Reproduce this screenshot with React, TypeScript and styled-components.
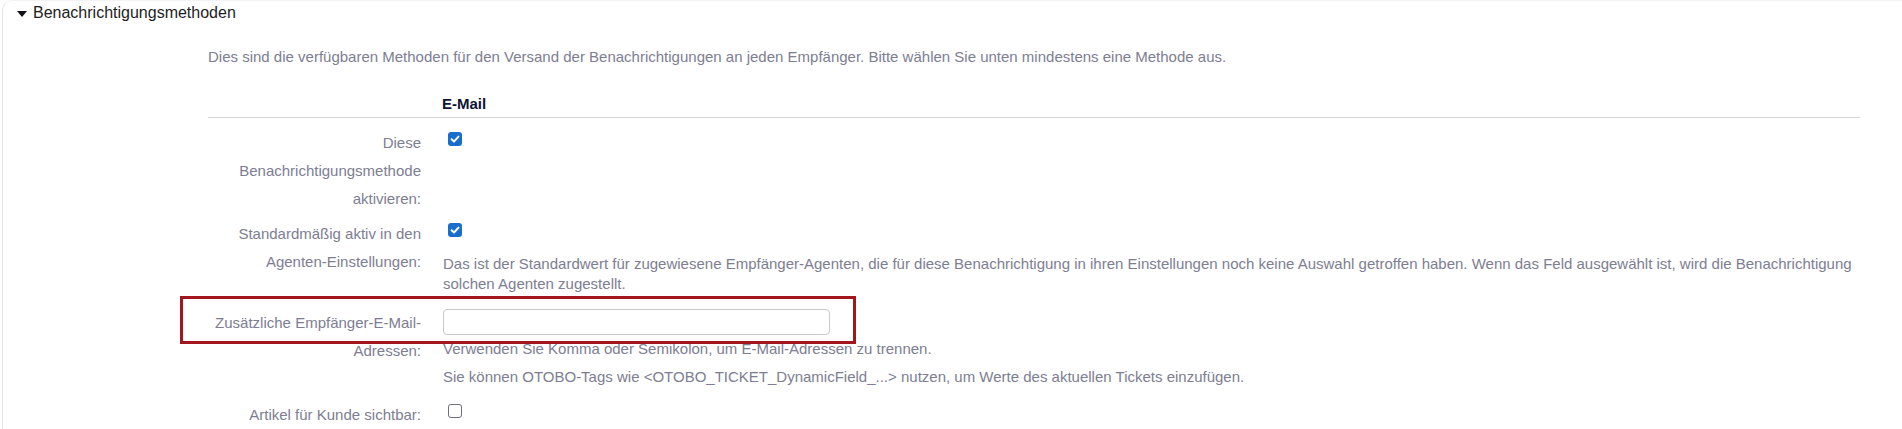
import React from "react";
import styled, { createGlobalStyle } from "styled-components";

const GlobalStyle = createGlobalStyle`
  html, body {
    margin: 0;
    padding: 0;
    background: #ffffff;
  }
  body {
    font-family: "Liberation Sans", Arial, Helvetica, sans-serif;
    font-size: 15px;
    color: #7d7e91;
  }
`;

const Panel = styled.section`
  margin-left: 2px;
  min-height: 429px;
  box-sizing: border-box;
  border-left: 1px solid #e3e3e9;
  border-top: 1px solid #f3f3f6;
  border-top-left-radius: 10px;
`;

const Header = styled.div`
  display: flex;
  align-items: center;
  gap: 6px;
  padding: 2px 0 0 14px;
  height: 20px;
  font-size: 16px;
  line-height: 20px;
  color: #1d1d22;
`;

const Caret = styled.span`
  width: 0;
  height: 0;
  border-left: 5px solid transparent;
  border-right: 5px solid transparent;
  border-top: 6px solid #111118;
  margin-top: 1px;
`;

const Content = styled.div`
  margin: 0 42px 0 205px;
`;

const Intro = styled.p`
  margin: 24px 0 0 0;
  line-height: 20px;
  color: #7d7e91;
`;

const Grid = styled.div`
  display: grid;
  grid-template-columns: 213px 1fr;
  column-gap: 22px;
`;

const HeadRow = styled(Grid)`
  margin-top: 27px;
  border-bottom: 1px solid #d4d4d8;
  padding-bottom: 3px;
`;

const ColumnTitle = styled.div`
  grid-column: 2;
  font-weight: bold;
  line-height: 20px;
  color: #0d1433;
  margin-left: -1px;
`;

const Row = styled(Grid)<{ $top: number }>`
  position: relative;
  margin-top: ${(p) => p.$top}px;
`;

const Label = styled.label`
  text-align: right;
  line-height: 28px;
  color: #7d7e91;
`;

const Field = styled.div`
  display: flex;
  flex-direction: column;
  align-items: flex-start;
`;

const Box = styled.span<{ $checked?: boolean }>`
  display: inline-flex;
  align-items: center;
  justify-content: center;
  box-sizing: border-box;
  width: 14px;
  height: 14px;
  margin: 3px 0 0 5px;
  border-radius: 3px;
  background: ${(p) => (p.$checked ? "#1a6ecb" : "#ffffff")};
  border: ${(p) => (p.$checked ? "none" : "1px solid #6f6f78")};
`;

const Hint = styled.p<{ $top?: number }>`
  margin: ${(p) => p.$top ?? 0}px 0 0 0;
  line-height: 20px;
  color: #7d7e91;
`;

const TextInput = styled.input`
  box-sizing: border-box;
  width: 387px;
  height: 26px;
  border: 1px solid #c9c9cf;
  border-radius: 4px;
  background: #ffffff;
  padding: 0 8px;
  font: inherit;
  outline: none;
`;

const Highlight = styled.div`
  position: absolute;
  left: -28px;
  top: -13px;
  width: 676px;
  height: 48px;
  box-sizing: border-box;
  border: 3px solid #a3161c;
  pointer-events: none;
`;

const Check: React.FC<{ checked?: boolean }> = ({ checked }) => (
  <Box $checked={checked} role="checkbox" aria-checked={!!checked}>
    {checked && (
      <svg width="10" height="10" viewBox="0 0 10 10">
        <path
          d="M1.6 5.2 L4 7.5 L8.5 2.6"
          fill="none"
          stroke="#ffffff"
          strokeWidth="1.9"
          strokeLinecap="round"
          strokeLinejoin="round"
        />
      </svg>
    )}
  </Box>
);

export default function App() {
  return (
    <>
      <GlobalStyle />
      <Panel>
        <Header>
          <Caret />
          <span>Benachrichtigungsmethoden</span>
        </Header>
        <Content>
          <Intro>
            Dies sind die verfügbaren Methoden für den Versand der Benachrichtigungen an jeden Empfänger. Bitte wählen Sie
            unten mindestens eine Methode aus.
          </Intro>
          <HeadRow>
            <ColumnTitle>E-Mail</ColumnTitle>
          </HeadRow>
          <Row $top={11}>
            <Label>Diese Benachrichtigungsmethode aktivieren:</Label>
            <Field>
              <Check checked />
            </Field>
          </Row>
          <Row $top={7}>
            <Label>Standardmäßig aktiv in den Agenten-Einstellungen:</Label>
            <Field>
              <Check checked />
              <Hint $top={17}>
                Das ist der Standardwert für zugewiesene Empfänger-Agenten, die für diese Benachrichtigung in ihren
                Einstellungen noch keine Auswahl getroffen haben. Wenn das Feld ausgewählt ist, wird die
                Benachrichtigung solchen Agenten zugestellt.
              </Hint>
            </Field>
          </Row>
          <Row $top={15}>
            <Label>Zusätzliche Empfänger-E-Mail-Adressen:</Label>
            <Field>
              <TextInput type="text" aria-label="Zusätzliche Empfänger-E-Mail-Adressen" />
              <Hint $top={4}>Verwenden Sie Komma oder Semikolon, um E-Mail-Adressen zu trennen.</Hint>
              <Hint $top={8}>
                Sie können OTOBO-Tags wie &lt;OTOBO_TICKET_DynamicField_...&gt; nutzen, um Werte des aktuellen Tickets
                einzufügen.
              </Hint>
            </Field>
            <Highlight />
          </Row>
          <Row $top={14}>
            <Label>Artikel für Kunde sichtbar:</Label>
            <Field>
              <Check />
            </Field>
          </Row>
        </Content>
      </Panel>
    </>
  );
}
